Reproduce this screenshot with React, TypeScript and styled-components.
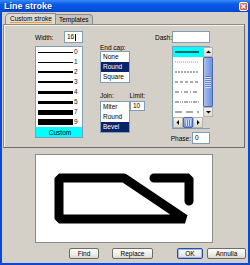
import React from "react";
import styled, { createGlobalStyle } from "styled-components";

const Global = createGlobalStyle`
  html, body { margin: 0; padding: 0; }
  body {
    width: 250px; height: 265px; overflow: hidden;
    font-family: "Liberation Sans", Arial, sans-serif;
    font-size: 6.5px; color: #000;
  }
`;

const Window = styled.div`
  width: 250px; height: 265px; box-sizing: border-box;
  background: #0a48d6;
  display: flex; flex-direction: column;
  padding: 0 2px 2px 2px;
`;

const TitleBar = styled.div`
  height: 12px; margin: 0 -2px; padding: 0 2px 0 4px; box-sizing: border-box;
  background: linear-gradient(#3a8af8, #0a5ae8 35%, #0650dc 80%, #0644c8);
  display: flex; align-items: center; justify-content: space-between;
  color: #fff; font-weight: bold; font-size: 9px; line-height: 12px;
  text-shadow: 1px 1px 0 #0a2a80;
`;

const CloseBtn = styled.div`
  width: 9px; height: 9px; box-sizing: border-box;
  border: 1px solid #fff; border-radius: 2px;
  background: linear-gradient(135deg, #f08a66, #d8431c);
  display: flex; align-items: center; justify-content: center;
  margin-top: 1px;
`;

const Client = styled.div`
  flex: 1; background: #d4d0c8;
  display: flex; flex-direction: column;
  padding: 1px 0 0 1px;
`;

const TabStrip = styled.div`
  display: flex; height: 11px; padding-left: 2px; align-items: flex-end;
`;

const Tab = styled.div<{ $active?: boolean }>`
  height: ${(p) => (p.$active ? 11 : 10)}px; box-sizing: border-box;
  padding: 0 3px 0 ${(p) => (p.$active ? 4 : 3)}px;
  border: 1px solid #8c8a84; border-bottom: none;
  border-top-left-radius: ${(p) => (p.$active ? 5 : 1)}px;
  border-top-right-radius: ${(p) => (p.$active ? 1 : 4)}px;
  background: ${(p) => (p.$active ? "#dedbd4" : "#c8c4bc")};
  display: flex; align-items: center;
  margin-left: ${(p) => (p.$active ? 0 : -1)}px;
  position: relative; z-index: ${(p) => (p.$active ? 1 : 0)};
  line-height: 8px;
`;

const TabLabel = styled.span<{ $focus?: boolean }>`
  border-bottom: 1px solid ${(p) => (p.$focus ? "#f0a030" : "transparent")};
  line-height: 7px;
`;

const Panel = styled.div`
  width: 242px; height: 124px; box-sizing: border-box;
  border: 1px solid #8c8a84; border-right-color: #6e6c68; border-bottom-color: #6e6c68;
  box-shadow: inset 1px 1px 0 #f4f2ee;
  display: flex; align-items: flex-start;
  padding: 6px 0 0 31px;
`;

const Column = styled.div<{ $w: number; $ml?: number; $mt?: number }>`
  width: ${(p) => p.$w}px; margin-left: ${(p) => p.$ml ?? 0}px;
  margin-top: ${(p) => p.$mt ?? 0}px;
  display: flex; flex-direction: column;
`;

const FieldRow = styled.div<{ $end?: boolean }>`
  display: flex; align-items: center; height: 12px;
  justify-content: ${(p) => (p.$end ? "flex-end" : "space-between")};
`;

const LabelRow = styled.div`
  display: flex; margin-top: 7px; height: 11px; align-items: center;
`;

const ListRow = styled.div`
  display: flex; align-items: flex-start;
`;

const Label = styled.div<{ $w?: number; $mr?: number }>`
  line-height: 7px; height: 7px; white-space: nowrap;
  ${(p) => (p.$w ? `width: ${p.$w}px;` : "")}
  margin-right: ${(p) => p.$mr ?? 0}px;
`;

const Input = styled.div<{ $w: number; $h?: number }>`
  width: ${(p) => p.$w}px; height: ${(p) => p.$h ?? 12}px; box-sizing: border-box;
  border: 1px solid #7f9db9; background: #fff;
  padding-left: 2px; line-height: ${(p) => (p.$h ?? 12) - 2}px;
  display: flex; align-items: center;
`;

const Caret = styled.span`
  display: inline-block; width: 1px; height: 7px; background: #000; margin-left: 0.5px;
`;

const ListBox = styled.div<{ $w: number; $mt?: number }>`
  width: ${(p) => p.$w}px; box-sizing: border-box; margin-top: ${(p) => p.$mt ?? 0}px;
  border: 1px solid #7f9db9; background: #fff;
  display: flex; flex-direction: column;
`;

const ListItem = styled.div<{ $sel?: boolean }>`
  height: 10px; line-height: 10px; padding-left: 2px;
  background: ${(p) => (p.$sel ? "#0a246a" : "transparent")};
  color: ${(p) => (p.$sel ? "#fff" : "#000")};
`;

const WidthItem = styled.div<{ $cyan?: boolean }>`
  height: 10px; display: flex; align-items: center; padding-left: 2px;
  background: ${(p) => (p.$cyan ? "#00ffff" : "transparent")};
  justify-content: ${(p) => (p.$cyan ? "center" : "flex-start")};
`;

const WidthLine = styled.div<{ $t: number }>`
  width: 35px; height: ${(p) => p.$t}px; background: #000;
`;

const WidthNum = styled.span`
  margin-left: 1px; line-height: 10px; color: #222;
`;

const DashBox = styled.div`
  width: 38px; height: 83px; box-sizing: border-box; margin-top: 3px; align-self: flex-end;
  border: 1px solid #7f9db9; background: #fff;
  display: grid; grid-template-columns: 1fr 10px; grid-template-rows: 1fr 11px;
`;

const DashItems = styled.div`
  display: flex; flex-direction: column; overflow: hidden;
`;

const DashItem = styled.div<{ $cyan?: boolean }>`
  height: 10px; flex: none; display: flex; align-items: center; padding-left: 2px;
  background: ${(p) => (p.$cyan ? "#00ffff" : "transparent")};
`;

const VScroll = styled.div`
  display: flex; flex-direction: column; background: #eeede5;
`;

const ScrollBtn = styled.div<{ $w?: number; $h?: number }>`
  width: ${(p) => p.$w ?? 10}px; height: ${(p) => p.$h ?? 10}px; box-sizing: border-box; flex: none;
  border: 1px solid #b8b4ac; background: linear-gradient(#f4f3ee, #dcd9d0);
  display: flex; align-items: center; justify-content: center;
`;

const Thumb = styled.div<{ $horiz?: boolean }>`
  box-sizing: border-box; flex: none;
  ${(p) => (p.$horiz ? "width: 10px; height: 100%;" : "height: 50px; width: 100%;")}
  border: 1px solid #4a6ab8; border-radius: 1px;
  background: linear-gradient(${(p) => (p.$horiz ? "180deg" : "90deg")}, #a8bff0, #6e8fdc);
  display: flex; align-items: center; justify-content: center;
`;

const Grip = styled.div<{ $horiz?: boolean }>`
  ${(p) => (p.$horiz ? "width: 5px; height: 6px;" : "width: 6px; height: 12px;")}
  background-image: repeating-linear-gradient(${(p) => (p.$horiz ? "90deg" : "0deg")},
    #e4ecfc 0 1px, #5a78c8 1px 2px);
  opacity: 0.8;
`;

const Track = styled.div`
  flex: 1; background: #f2f1ec;
`;

const HScroll = styled.div`
  display: flex; background: #eeede5;
`;

const Corner = styled.div`
  background: #d4d0c8;
`;

const Preview = styled.div`
  width: 178px; height: 89px; box-sizing: border-box; margin: 6px 0 0 32px;
  border: 1px solid #8a8a8a; background: #fff; display: flex;
`;

const ButtonRow = styled.div`
  display: flex; margin-top: 5px; height: 11px;
`;

const Button = styled.div<{ $w: number; $ml: number; $default?: boolean }>`
  width: ${(p) => p.$w}px; margin-left: ${(p) => p.$ml}px; height: 11px; box-sizing: border-box;
  border: 1px solid ${(p) => (p.$default ? "#2c4c9c" : "#6e6c68")}; border-radius: 2px;
  background: linear-gradient(#fdfdfb, #ebe9e2 70%, #d8d5cc);
  box-shadow: ${(p) => (p.$default ? "inset 0 0 0 1px #9cb8ec" : "none")};
  display: flex; align-items: center; justify-content: center; line-height: 9px;
`;

const widths = [
  { n: "0", t: 1 }, { n: "1", t: 1 }, { n: "2", t: 2 }, { n: "3", t: 2 },
  { n: "4", t: 3 }, { n: "5", t: 3 }, { n: "7", t: 5 }, { n: "9", t: 6 },
];

const dashes = ["", "1 1", "2 1", "3 2", "4 2 1 2", "4 1 1 1 1 1", "7 4"];

const Arrow = ({ dir }: { dir: "up" | "down" | "left" | "right" }) => {
  const pts = {
    up: "1,4 3.5,1.5 6,4",
    down: "1,2 3.5,4.5 6,2",
    left: "4,1 1.5,3.5 4,6",
    right: "2,1 4.5,3.5 2,6",
  }[dir];
  return (
    <svg width="7" height="7" viewBox="0 0 7 7">
      <polygon points={pts} fill="#000" />
    </svg>
  );
};

export default function App() {
  return (
    <>
      <Global />
      <Window>
        <TitleBar>
          <span>Line stroke</span>
          <CloseBtn>
            <svg width="5" height="5" viewBox="0 0 5 5">
              <path d="M0.5 0.5 L4.5 4.5 M4.5 0.5 L0.5 4.5" stroke="#fff" strokeWidth="1.2" />
            </svg>
          </CloseBtn>
        </TitleBar>
        <Client>
          <TabStrip>
            <Tab $active>
              <TabLabel $focus>Custom stroke</TabLabel>
            </Tab>
            <Tab>
              <TabLabel>Templates</TabLabel>
            </Tab>
          </TabStrip>
          <Panel>
            <Column $w={48}>
              <FieldRow>
                <Label>Width:</Label>
                <Input $w={19}>
                  16<Caret />
                </Input>
              </FieldRow>
              <ListBox $w={48} $mt={3}>
                {widths.map((w) => (
                  <WidthItem key={w.n}>
                    <WidthLine $t={w.t} />
                    <WidthNum>{w.n}</WidthNum>
                  </WidthItem>
                ))}
                <WidthItem $cyan>Custom</WidthItem>
              </ListBox>
            </Column>
            <Column $w={45} $ml={17} $mt={13}>
              <Label>End cap:</Label>
              <ListBox $w={30}>
                <ListItem>None</ListItem>
                <ListItem $sel>Round</ListItem>
                <ListItem>Square</ListItem>
              </ListBox>
              <LabelRow>
                <Label $w={30}>Join:</Label>
                <Label>Limit:</Label>
              </LabelRow>
              <ListRow>
                <ListBox $w={30}>
                  <ListItem>Miter</ListItem>
                  <ListItem>Round</ListItem>
                  <ListItem $sel>Bevel</ListItem>
                </ListBox>
                <Input $w={15} $h={10}>10</Input>
              </ListRow>
            </Column>
            <Column $w={55} $ml={10}>
              <FieldRow $end>
                <Label>Dash:</Label>
                <Input $w={38}></Input>
              </FieldRow>
              <DashBox>
                <DashItems>
                  {dashes.map((d, i) => (
                    <DashItem key={i} $cyan={i === 0}>
                      <svg width="24" height="2" viewBox="0 0 24 2">
                        <line
                          x1="0" y1="1" x2="24" y2="1"
                          stroke={i === 0 ? "#000" : i === 1 ? "#999" : "#555"}
                          strokeWidth={i === 0 ? 1.2 : 1}
                          strokeDasharray={d || undefined}
                        />
                      </svg>
                    </DashItem>
                  ))}
                </DashItems>
                <VScroll>
                  <ScrollBtn><Arrow dir="up" /></ScrollBtn>
                  <Thumb><Grip /></Thumb>
                  <Track />
                  <ScrollBtn><Arrow dir="down" /></ScrollBtn>
                </VScroll>
                <HScroll>
                  <ScrollBtn $h={11}><Arrow dir="left" /></ScrollBtn>
                  <Thumb $horiz><Grip $horiz /></Thumb>
                  <ScrollBtn $h={11}><Arrow dir="right" /></ScrollBtn>
                  <Track />
                </HScroll>
                <Corner />
              </DashBox>
              <FieldRow $end style={{ marginTop: 3 }}>
                <Label $mr={1}>Phase:</Label>
                <Input $w={18}>0</Input>
              </FieldRow>
            </Column>
          </Panel>
          <Preview>
            <svg width="176" height="87" viewBox="35 155 176 87">
              <path
                d="M184 219 L58 219 L58 178 L123 178 Z"
                fill="none" stroke="#000" strokeWidth="9" strokeLinejoin="bevel"
              />
              <path
                d="M153 178 L188 178 L188 201"
                fill="none" stroke="#000" strokeWidth="9" strokeLinejoin="bevel" strokeLinecap="round"
              />
            </svg>
          </Preview>
          <ButtonRow>
            <Button $w={30} $ml={66}>Find</Button>
            <Button $w={41} $ml={13}>Replace</Button>
            <Button $w={26} $ml={24} $default>OK</Button>
            <Button $w={39} $ml={4}>Annulla</Button>
          </ButtonRow>
        </Client>
      </Window>
    </>
  );
}
